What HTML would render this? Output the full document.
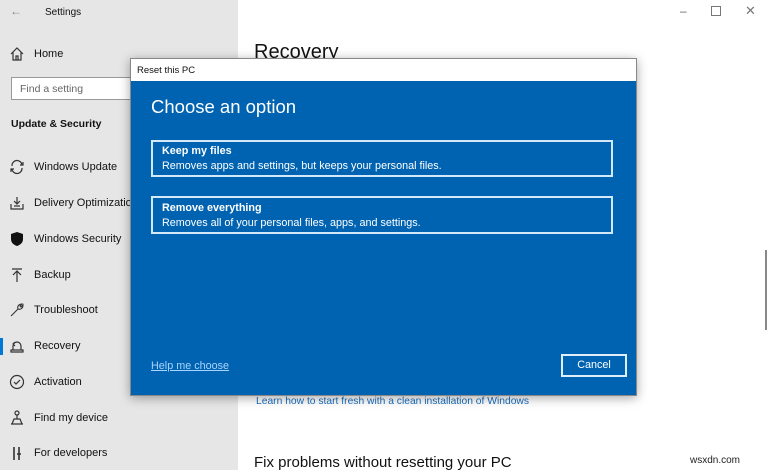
<!DOCTYPE html>
<html><head><style>
body{margin:0;width:768px;height:470px;overflow:hidden;font-family:"Liberation Sans",sans-serif;background:#fff;position:relative}
.a{position:absolute;white-space:nowrap}
#side{position:absolute;left:0;top:0;width:238px;height:470px;background:#e6e6e6}
.it{position:absolute;left:34px;font-size:11px;color:#111}
.ic{position:absolute;left:9px;width:16px;height:16px}
</style></head><body>
<div id="side">
<div class="a" style="left:10px;top:4px;font-size:12px;color:#888">&#8592;</div>
<div class="a" style="left:45px;top:7px;font-size:10px;color:#111">Settings</div>
<svg class="ic" style="top:46px" viewBox="0 0 16 16" fill="none" stroke="#333" stroke-width="1.2"><path d="M2 8 L8 2 L14 8 M4 6 V14 H12 V6 M7 14 V10 H9 V14"/></svg>
<div class="it" style="top:48px">Home</div>
<div class="a" style="left:11px;top:77px;width:224px;height:21px;border:1.5px solid #999;background:#fff"></div>
<div class="a" style="left:20px;top:83px;font-size:10.5px;color:#666">Find a setting</div>
<div class="a" style="left:11px;top:118px;font-size:10.5px;font-weight:bold;color:#111">Update &amp; Security</div>
<svg class="ic" style="top:159px" viewBox="0 0 16 16" fill="none" stroke="#333" stroke-width="1.2"><path d="M3 7 A5 5 0 0 1 13 6 M13 9 A5 5 0 0 1 3 10 M11 6 H14 V3 M5 10 H2 V13"/></svg>
<div class="it" style="top:161px">Windows Update</div>
<svg class="ic" style="top:195px" viewBox="0 0 16 16" fill="none" stroke="#333" stroke-width="1.2"><path d="M2 9 V14 H14 V9 M5 11 H11 M8 2 V9 M5 6 L8 9 L11 6"/></svg>
<div class="it" style="top:197px">Delivery Optimization</div>
<svg class="ic" style="top:231px" viewBox="0 0 16 16"><path d="M8 1 L14 3 V8 C14 12 11 14 8 15 C5 14 2 12 2 8 V3 Z" fill="#111"/></svg>
<div class="it" style="top:233px">Windows Security</div>
<svg class="ic" style="top:267px" viewBox="0 0 16 16" fill="none" stroke="#333" stroke-width="1.2"><path d="M3 2 H13 M8 4 V15 M4 8 L8 4 L12 8"/></svg>
<div class="it" style="top:269px">Backup</div>
<svg class="ic" style="top:302px" viewBox="0 0 16 16" fill="none" stroke="#333" stroke-width="1.1"><path d="M2 14 L9 7 C8 4 10 2 13 2 L11 4 L12 5 L14 3 C14 6 12 8 9 7"/></svg>
<div class="it" style="top:304px">Troubleshoot</div>
<div class="a" style="left:0;top:338px;width:3px;height:17px;background:#0078d7"></div>
<svg class="ic" style="top:338px" viewBox="0 0 16 16" fill="none" stroke="#333" stroke-width="1.2"><path d="M2 12 H14 V14 H2 Z M4 12 V8 A4 4 0 0 1 12 8 V12 M6 4 L4 6 L6 8"/></svg>
<div class="it" style="top:340px">Recovery</div>
<svg class="ic" style="top:374px" viewBox="0 0 16 16" fill="none" stroke="#333" stroke-width="1.2"><circle cx="8" cy="8" r="6.5"/><path d="M5 8 L7 10 L11 6"/></svg>
<div class="it" style="top:376px">Activation</div>
<svg class="ic" style="top:410px" viewBox="0 0 16 16" fill="none" stroke="#333" stroke-width="1.2"><circle cx="8" cy="3" r="2"/><path d="M8 5 V9 M3 14 L5 9 H11 L13 14 M2 14 H14"/></svg>
<div class="it" style="top:412px">Find my device</div>
<svg class="ic" style="top:445px" viewBox="0 0 16 16" fill="none" stroke="#333" stroke-width="1.6"><path d="M5 2 V15 M10 2 V15 M8 9 H12"/></svg>
<div class="it" style="top:447px">For developers</div>
</div>
<div class="a" style="left:254px;top:41px;font-size:20px;color:#111">Recovery</div>
<div class="a" style="left:680px;top:4px;font-size:12px;color:#666">&#8211;</div>
<div class="a" style="left:711px;top:6px;width:8px;height:8px;border:1px solid #777"></div>
<div class="a" style="left:745px;top:3px;font-size:13px;color:#777">&#10005;</div>
<div class="a" style="left:765px;top:250px;width:2px;height:80px;background:#888"></div>
<div class="a" style="left:256px;top:396px;font-size:10.3px;color:#1a6fc0">Learn how to start fresh with a clean installation of Windows</div>
<div class="a" style="left:254px;top:454px;font-size:15px;color:#111">Fix problems without resetting your PC</div>
<div class="a" style="left:690px;top:455px;font-size:10px;color:#222">wsxdn.com</div>
<div class="a" style="left:130px;top:58px;width:507px;height:338px;box-shadow:0 2px 10px rgba(0,0,0,.35);border:1px solid #888;box-sizing:border-box">
<div style="height:22px;background:#fff;font-size:9.5px;padding:6px 0 0 6px;box-sizing:border-box;color:#111">Reset this PC</div>
<div style="position:absolute;top:22px;left:0;right:0;bottom:0;background:#0063b1"></div>
</div>
<div class="a" style="left:151px;top:96px;font-size:18.5px;color:#fff">Choose an option</div>
<div class="a" style="left:151px;top:140px;width:462px;height:37px;border:2px solid #d4e9f8;box-sizing:border-box"></div>
<div class="a" style="left:162px;top:145px;font-size:10.8px;font-weight:bold;color:#fff">Keep my files</div>
<div class="a" style="left:162px;top:160px;font-size:10.8px;color:#fff">Removes apps and settings, but keeps your personal files.</div>
<div class="a" style="left:151px;top:196px;width:462px;height:38px;border:2px solid #d4e9f8;box-sizing:border-box"></div>
<div class="a" style="left:162px;top:202px;font-size:10.8px;font-weight:bold;color:#fff">Remove everything</div>
<div class="a" style="left:162px;top:217px;font-size:10.8px;color:#fff">Removes all of your personal files, apps, and settings.</div>
<div class="a" style="left:151px;top:360px;font-size:10.8px;color:#a8d4ff;text-decoration:underline">Help me choose</div>
<div class="a" style="left:561px;top:354px;width:66px;height:23px;border:2px solid #e0eefa;box-sizing:border-box;color:#fff;font-size:10.8px;text-align:center;line-height:19px">Cancel</div>
</body></html>
